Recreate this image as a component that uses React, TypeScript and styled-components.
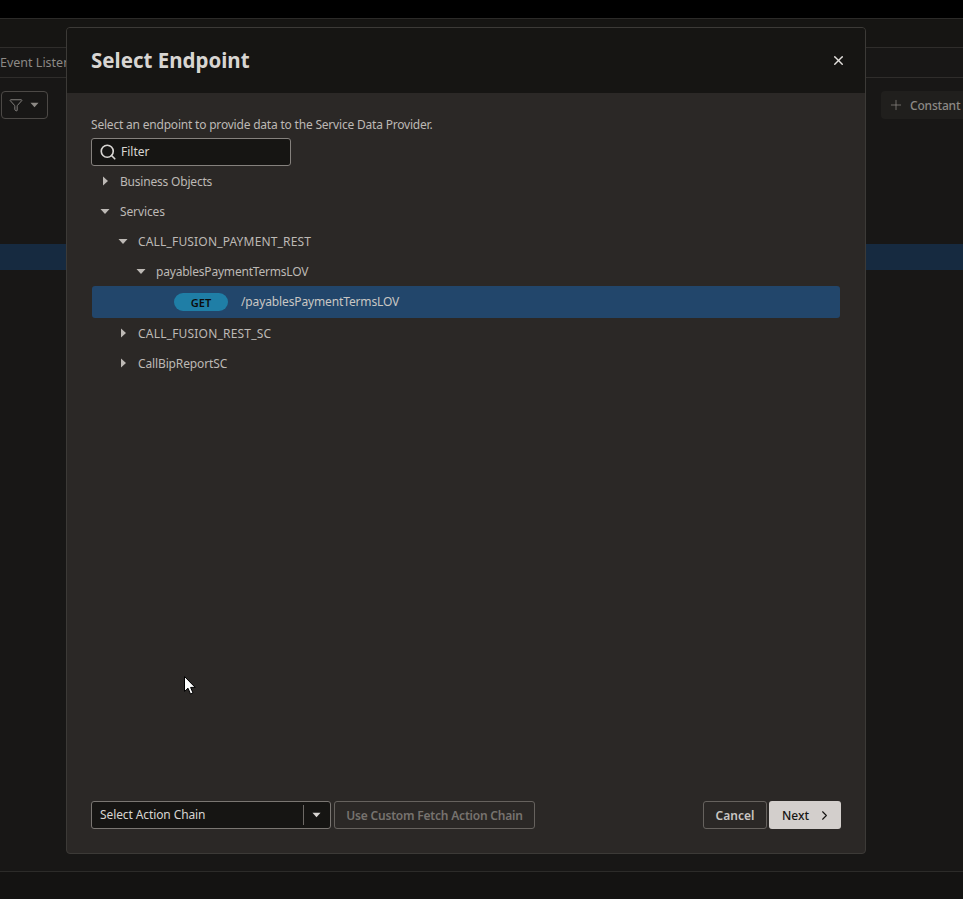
import { FC } from "react";
import styled, { createGlobalStyle } from "styled-components";
import { ChevronRight, Funnel, Plus, Search, X } from "lucide-react";

const font = `"Noto Sans", "Open Sans", "Liberation Sans", sans-serif`;

const treeRows = [
  { label: "Business Objects", level: 0, open: false, tracking: -0.2 },
  { label: "Services", level: 0, open: true, tracking: -0.12 },
  { label: "CALL_FUSION_PAYMENT_REST", level: 1, open: true, tracking: 0.17 },
  { label: "payablesPaymentTermsLOV", level: 2, open: true, tracking: -0.2 },
];

const afterRows = [
  { label: "CALL_FUSION_REST_SC", level: 1, open: false, tracking: 0.2 },
  { label: "CallBipReportSC", level: 1, open: false, tracking: -0.13 },
];

const Caret: FC<{ open: boolean }> = ({ open }) => (
  <CaretBox viewBox="0 0 10 10" open={open}>
    <path d="M3 0.5 L8 5 L3 9.5 Z" fill="currentColor" />
  </CaretBox>
);

const TreeRow: FC<{
  label: string;
  level: number;
  open: boolean;
  tracking: number;
}> = ({ label, level, open, tracking }) => (
  <Row level={level}>
    <Caret open={open} />
    <RowLabel tracking={tracking}>{label}</RowLabel>
  </Row>
);

const App: FC = () => (
  <>
    <GlobalStyle />
    <Page>
      <TopBar />
      <BlankRow />
      <TabRow>
        <TabLabel>Event Listeners</TabLabel>
      </TabRow>
      <ToolRow>
        <FilterButton>
          <Funnel size={14} strokeWidth={1.6} />
          <SmallCaret viewBox="0 0 10 6">
            <path d="M0.5 0.5 H9.5 L5 5.5 Z" fill="currentColor" />
          </SmallCaret>
        </FilterButton>
        <ConstantButton>
          <Plus size={16} strokeWidth={1.1} />
          <ConstantText>Constant</ConstantText>
        </ConstantButton>
      </ToolRow>
      <BackdropSelected />
      <BottomBar />
    </Page>
    <Dialog>
      <Header>
        <Title>Select Endpoint</Title>
        <CloseButton>
          <X size={15} strokeWidth={2.2} />
        </CloseButton>
      </Header>
      <Body>
        <Description>
          Select an endpoint to provide data to the Service Data Provider.
        </Description>
        <FilterBox>
          <Search size={18} strokeWidth={2.2} />
          <FilterText>Filter</FilterText>
        </FilterBox>
        <Tree>
          {treeRows.map((r) => (
            <TreeRow key={r.label} {...r} />
          ))}
          <SelectedRow>
            <Method>GET</Method>
            <SelectedPath>/payablesPaymentTermsLOV</SelectedPath>
          </SelectedRow>
          {afterRows.map((r) => (
            <TreeRow key={r.label} {...r} />
          ))}
        </Tree>
        <Footer>
          <ChainSelect>
            <ChainText>Select Action Chain</ChainText>
            <ChainDivider />
            <ChainCaret viewBox="0 0 10 6">
              <path d="M0.5 0.5 H9.5 L5 5.5 Z" fill="currentColor" />
            </ChainCaret>
          </ChainSelect>
          <DisabledButton>Use Custom Fetch Action Chain</DisabledButton>
          <FooterSpacer />
          <CancelButton>Cancel</CancelButton>
          <NextButton>
            Next
            <ChevronRight size={15} strokeWidth={1.8} />
          </NextButton>
        </Footer>
      </Body>
    </Dialog>
    <Cursor viewBox="0 0 12 19">
      <path
        d="M0.5 0.5 V15.5 L4 12.2 L6.5 18 L9 17 L6.6 11.4 H11.2 Z"
        fill="#fff"
        stroke="#000"
        strokeWidth="1"
      />
    </Cursor>
  </>
);

export default App;

const GlobalStyle = createGlobalStyle`
  html, body {
    margin: 0;
    padding: 0;
    height: 100%;
    background: #161513;
    overflow: hidden;
  }
  * {
    box-sizing: border-box;
  }
`;

const Page = styled.div`
  width: 963px;
  height: 899px;
  display: flex;
  flex-direction: column;
  font-family: ${font};
  background: #181716;
  overflow: hidden;
`;

const TopBar = styled.div`
  height: 19px;
  background: #000;
  border-bottom: 1px solid #2c2b29;
`;

const BlankRow = styled.div`
  height: 29px;
  background: #161513;
  border-bottom: 1px solid #2f2d2b;
`;

const TabRow = styled.div`
  height: 30px;
  display: flex;
  align-items: center;
  background: #181716;
  border-bottom: 1px solid #2f2d2b;
`;

const TabLabel = styled.span`
  font-size: 12.5px;
  color: #8c8985;
  white-space: nowrap;
`;

const ToolRow = styled.div`
  display: flex;
  justify-content: space-between;
  padding: 13px 0 0 1px;
  height: 166px;
`;

const FilterButton = styled.div`
  width: 47px;
  height: 28px;
  display: flex;
  align-items: center;
  gap: 7px;
  padding-left: 7px;
  border: 1px solid #4c4946;
  border-radius: 4px;
  color: #8c8985;
`;

const SmallCaret = styled.svg`
  width: 9px;
  height: 6px;
`;

const ConstantButton = styled.div`
  width: 82px;
  height: 28px;
  display: flex;
  align-items: center;
  gap: 6px;
  padding-left: 7px;
  border-radius: 4px 0 0 4px;
  background: #201f1d;
  color: #8c8985;
`;

const ConstantText = styled.span`
  font-size: 12px;
  font-weight: 500;
  letter-spacing: -0.2px;
  white-space: nowrap;
`;

const BackdropSelected = styled.div`
  height: 26px;
  background: #162a40;
`;

const BottomBar = styled.div`
  margin-top: 601px;
  flex: 1;
  background: #141312;
  border-top: 1px solid #2c2b29;
`;

const Dialog = styled.div`
  position: absolute;
  left: 66px;
  top: 27px;
  width: 800px;
  height: 827px;
  display: flex;
  flex-direction: column;
  font-family: ${font};
  border: 1px solid #3c3a37;
  border-radius: 4px;
  overflow: hidden;
  background: #2b2826;
`;

const Header = styled.div`
  height: 65px;
  flex-shrink: 0;
  display: flex;
  align-items: center;
  justify-content: space-between;
  padding: 0 19px 0 24px;
  background: #161513;
`;

const Title = styled.div`
  padding-bottom: 2px;
  font-size: 20.5px;
  font-weight: 700;
  color: #d8d5d2;
`;

const CloseButton = styled.div`
  display: flex;
  color: #e4e1de;
`;

const Body = styled.div`
  flex: 1;
  display: flex;
  flex-direction: column;
  padding: 23px 24px 24px;
`;

const Description = styled.div`
  height: 18px;
  line-height: 18px;
  margin-bottom: 4px;
  font-size: 12px;
  letter-spacing: -0.2px;
  color: #bdb9b5;
  white-space: nowrap;
`;

const FilterBox = styled.div`
  width: 200px;
  height: 28px;
  display: flex;
  align-items: center;
  gap: 4px;
  padding-left: 7px;
  background: #161513;
  border: 1px solid #85817d;
  border-radius: 3px;
  color: #d8d5d2;
`;

const FilterText = styled.span`
  padding-bottom: 2px;
  font-size: 12px;
  color: #d8d5d2;
`;

const Tree = styled.div`
  display: flex;
  flex-direction: column;
`;

const Row = styled.div<{ level: number }>`
  height: 30px;
  display: flex;
  align-items: center;
  gap: 10px;
  padding-left: ${(p) => 9 + p.level * 18}px;
  color: #bdb9b5;
`;

const CaretBox = styled.svg<{ open: boolean }>`
  width: 10px;
  height: 10px;
  flex-shrink: 0;
  transform: rotate(${(p) => (p.open ? 90 : 0)}deg);
`;

const RowLabel = styled.span<{ tracking: number }>`
  font-size: 12px;
  letter-spacing: ${(p) => p.tracking}px;
  white-space: nowrap;
`;

const SelectedRow = styled.div`
  height: 32px;
  margin-left: 1px;
  margin-right: 1px;
  display: flex;
  align-items: center;
  gap: 13px;
  padding-left: 82px;
  background: #22466b;
  border-radius: 3px;
`;

const Method = styled.span`
  width: 54px;
  height: 18px;
  display: flex;
  align-items: center;
  justify-content: center;
  border-radius: 9px;
  background: #1f7ea6;
  color: #0c0c0c;
  font-size: 11px;
  font-weight: 600;
`;

const SelectedPath = styled.span`
  padding-bottom: 2px;
  font-size: 12px;
  letter-spacing: -0.13px;
  color: #c9c6c3;
`;

const Footer = styled.div`
  margin-top: auto;
  display: flex;
  align-items: center;
`;

const ChainSelect = styled.div`
  width: 240px;
  height: 28px;
  display: flex;
  align-items: center;
  padding-left: 8px;
  background: #161513;
  border: 1px solid #7a7672;
  border-radius: 3px;
`;

const ChainText = styled.span`
  flex: 1;
  padding-bottom: 2px;
  font-size: 12px;
  letter-spacing: -0.1px;
  color: #d8d5d2;
`;

const ChainDivider = styled.span`
  width: 1px;
  height: 20px;
  background: #6d6965;
`;

const ChainCaret = styled.svg`
  width: 9px;
  height: 6px;
  margin: 0 9px 0 8px;
  color: #d8d5d2;
`;

const DisabledButton = styled.div`
  width: 201px;
  height: 28px;
  margin-left: 3px;
  display: flex;
  align-items: center;
  justify-content: center;
  border: 1px solid #66625e;
  border-radius: 3px;
  color: #77736f;
  font-size: 12px;
  font-weight: 600;
  letter-spacing: -0.2px;
  white-space: nowrap;
`;

const FooterSpacer = styled.div`
  flex: 1;
`;

const CancelButton = styled.div`
  width: 64px;
  height: 28px;
  display: flex;
  align-items: center;
  justify-content: center;
  border: 1px solid #66625e;
  border-radius: 3px;
  color: #c9c6c3;
  font-size: 12px;
  font-weight: 600;
`;

const NextButton = styled.div`
  width: 72px;
  height: 28px;
  margin-left: 2px;
  display: flex;
  align-items: center;
  gap: 8px;
  padding-left: 13px;
  background: #d3cfcc;
  border-radius: 3px;
  color: #161513;
  font-size: 12px;
  font-weight: 500;
`;

const Cursor = styled.svg`
  position: absolute;
  left: 184px;
  top: 676px;
  width: 12px;
  height: 19px;
`;
